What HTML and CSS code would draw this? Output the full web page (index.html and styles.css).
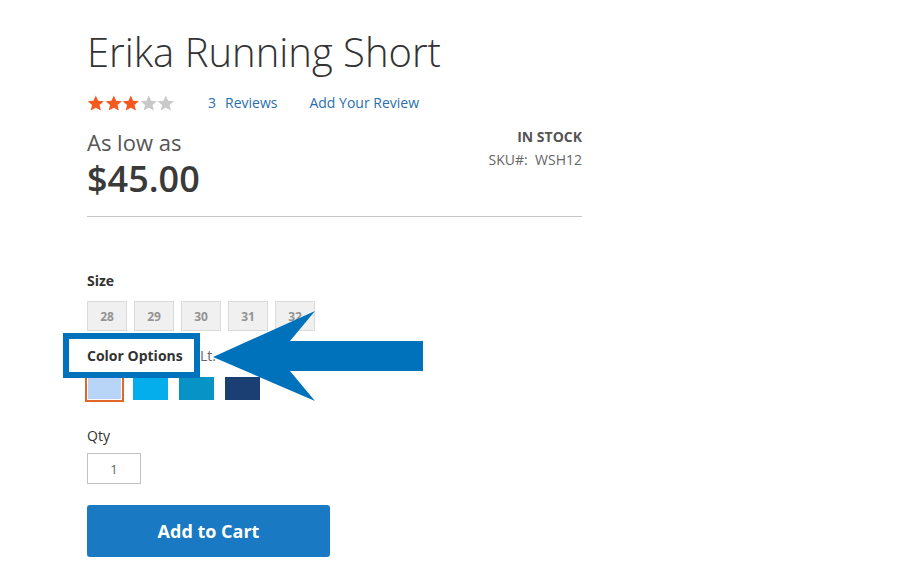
FILE: index.html
```html
<!DOCTYPE html>
<html lang="en">
<head>
<meta charset="utf-8">
<title>Erika Running Short</title>
<link rel="stylesheet" href="styles.css">
</head>
<body>
<div class="page">
  <h1 class="title">Erika Running Short</h1>

  <div class="rating-row">
    <div class="stars">
      <svg class="star on" viewBox="1 1 22 21"><path d="M12 1.5l3.1 7 7.5.6-5.7 5 1.8 7.4L12 17.6l-6.7 3.9 1.8-7.4-5.7-5 7.5-.6z"/></svg>
      <svg class="star on" viewBox="1 1 22 21"><path d="M12 1.5l3.1 7 7.5.6-5.7 5 1.8 7.4L12 17.6l-6.7 3.9 1.8-7.4-5.7-5 7.5-.6z"/></svg>
      <svg class="star on" viewBox="1 1 22 21"><path d="M12 1.5l3.1 7 7.5.6-5.7 5 1.8 7.4L12 17.6l-6.7 3.9 1.8-7.4-5.7-5 7.5-.6z"/></svg>
      <svg class="star off" viewBox="1 1 22 21"><path d="M12 1.5l3.1 7 7.5.6-5.7 5 1.8 7.4L12 17.6l-6.7 3.9 1.8-7.4-5.7-5 7.5-.6z"/></svg>
      <svg class="star off" viewBox="1 1 22 21"><path d="M12 1.5l3.1 7 7.5.6-5.7 5 1.8 7.4L12 17.6l-6.7 3.9 1.8-7.4-5.7-5 7.5-.6z"/></svg>
    </div>
    <a class="link reviews" href="#"><span>3</span><span class="reviews-word">Reviews</span></a>
    <a class="link add-review" href="#">Add Your Review</a>
  </div>

  <div class="price-info">
    <div class="price-box">
      <div class="price-label">As low as</div>
      <div class="price">$45.00</div>
    </div>
    <div class="stock-box">
      <div class="stock">IN STOCK</div>
      <div class="sku">SKU#:&nbsp; WSH12</div>
    </div>
  </div>

  <div class="options">
    <div class="opt-label">Size</div>
    <div class="size-swatches">
      <div class="size">28</div>
      <div class="size">29</div>
      <div class="size">30</div>
      <div class="size">31</div>
      <div class="size">32</div>
    </div>

    <div class="color-head"><span class="selected-opt">Lt.</span></div>
    <div class="color-swatches">
      <div class="color c1 selected"></div>
      <div class="color c2"></div>
      <div class="color c3"></div>
      <div class="color c4"></div>
    </div>

    <div class="qty-label">Qty</div>
    <div class="qty">1</div>

    <button class="cart">Add to Cart</button>
  </div>

  <div class="callout">Color Options</div>
  <svg class="arrow" viewBox="0 0 220 100" width="220" height="100"><polygon points="8,52 110,6 85,36 218,36 218,66 85,66 110,96"/></svg>
</div>
</body>
</html>
```

FILE: styles.css
```css
* { box-sizing: border-box; }
html, body { margin: 0; padding: 0; background: #fff; }
body {
  font-family: "Open Sans", "Liberation Sans", sans-serif;
  color: #333;
  font-size: 14px;
}
.page {
  position: relative;
  width: 907px;
  height: 573px;
  padding: 30px 0 0 87px;
  overflow: hidden;
}
.title {
  margin: 0;
  font-size: 40px;
  line-height: 44px;
  font-weight: 300;
  color: #333;
}
.rating-row {
  display: flex;
  align-items: center;
  height: 16px;
  margin-top: 21px;
  width: 495px;
}
.stars { display: flex; width: 88px; }
.star { width: 17.6px; height: 16px; flex: none; }
.star.on { fill: #f45a1d; }
.star.off { fill: #c9c9c9; }
.link {
  color: #2a6fad;
  text-decoration: none;
  font-size: 14px;
  line-height: 16px;
}
.reviews { margin-left: 33px; }
.reviews-word { margin-left: 9px; }
.add-review { margin-left: 32px; }

.price-info {
  display: flex;
  justify-content: space-between;
  width: 495px;
  margin-top: 16px;
}
.price-label {
  padding-top: 2px;
  font-size: 22px;
  line-height: 26px;
  color: #555;
}
.price {
  margin-top: 6px;
  font-size: 36px;
  line-height: 36px;
  font-weight: 600;
  color: #3a3a3a;
}
.stock-box { text-align: right; }
.stock {
  font-weight: 700;
  font-size: 14px;
  line-height: 20px;
  color: #555;
}
.sku {
  margin-top: 3px;
  font-size: 14px;
  line-height: 20px;
  color: #666;
}

.options {
  margin-top: 19px;
  border-top: 1px solid #c6c6c6;
  width: 495px;
  padding-top: 54px;
}
.opt-label {
  font-weight: 700;
  font-size: 14px;
  line-height: 20px;
  color: #333;
}
.size-swatches {
  display: flex;
  gap: 7px;
  margin-top: 10px;
}
.size {
  width: 40px;
  height: 30px;
  background: #f0f0f0;
  border: 1px solid #dadada;
  color: #949494;
  font-weight: 700;
  font-size: 12px;
  display: flex;
  align-items: center;
  justify-content: center;
}
.color-head {
  display: flex;
  margin-top: 15px;
  line-height: 20px;
  padding-left: 113px;
}
.selected-opt { color: #666; font-size: 14px; }
.color-swatches {
  display: flex;
  gap: 11px;
  margin-top: 11px;
}
.color {
  width: 35px;
  height: 23px;
  border: 1px solid #dadada;
}
.color.selected { outline: 2px solid #e0662b; border-color: #fff; }
.c1 { background: #b8d4f6; }
.c2 { background: #04adeb; border-color: #04adeb; }
.c3 { background: #0893c6; border-color: #0893c6; }
.c4 { background: #1b3f72; border-color: #1b3f72; }

.qty-label {
  margin-top: 26px;
  font-size: 14px;
  line-height: 20px;
  color: #333;
}
.qty {
  margin-top: 7px;
  width: 54px;
  height: 31px;
  border: 1px solid #c2c2c2;
  display: flex;
  align-items: center;
  justify-content: center;
  color: #666;
  font-size: 13px;
}
.cart {
  display: block;
  margin-top: 21px;
  width: 243px;
  height: 52px;
  border: 0;
  border-radius: 3px;
  background: #1979c3;
  color: #fff;
  font-family: "Open Sans", "Liberation Sans", sans-serif;
  font-weight: 700;
  font-size: 18px;
  padding: 0;
}

.callout {
  position: absolute;
  left: 63px;
  top: 333px;
  width: 137px;
  height: 45px;
  border: 6px solid #0071bb;
  background: #fff;
  padding-left: 18px;
  font-weight: 700;
  font-size: 14px;
  line-height: 33px;
  color: #333;
}
.arrow {
  position: absolute;
  left: 205px;
  top: 305px;
  fill: #0071bb;
}
```
